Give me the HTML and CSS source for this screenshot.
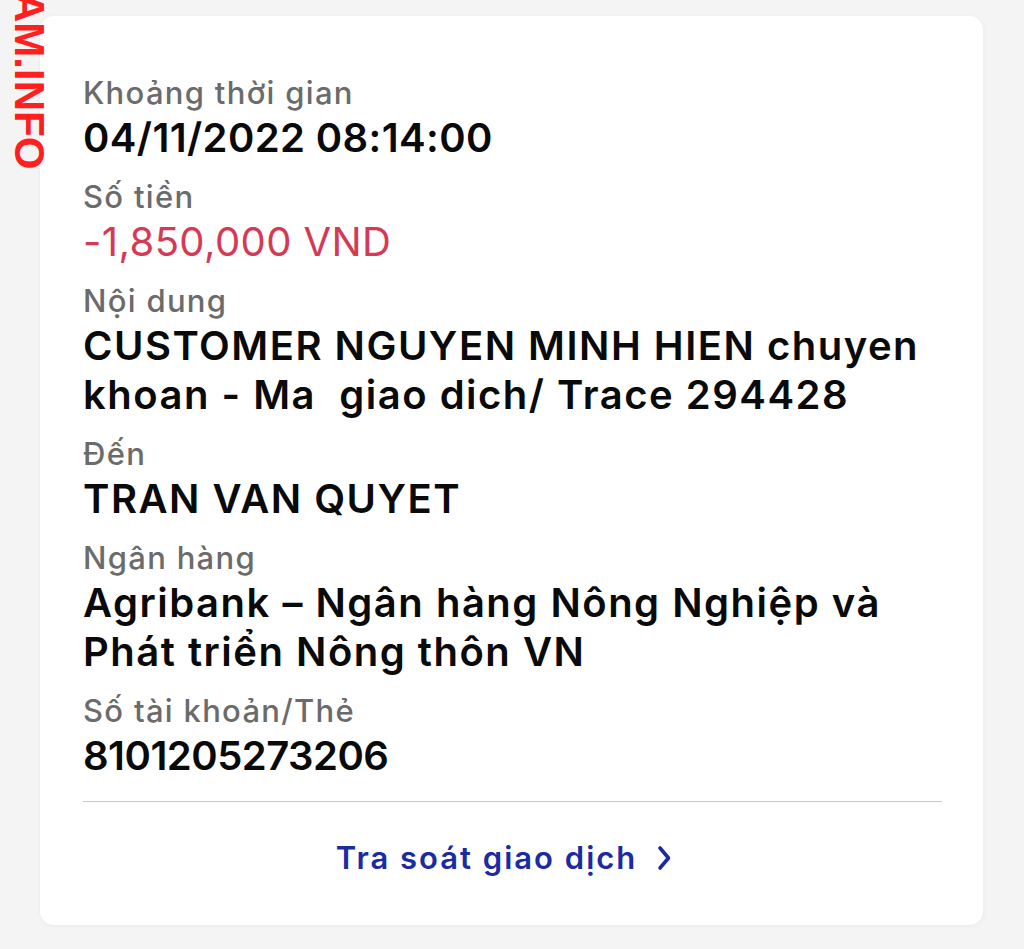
FILE: index.html
```html
<!DOCTYPE html>
<html lang="vi">
<head>
<meta charset="utf-8">
<title>Chi tiết giao dịch</title>
<link rel="stylesheet" href="styles.css">
</head>
<body>
<div class="watermark">AM.INFO</div>
<main class="card">
  <div class="field">
    <div class="label">Khoảng thời gian</div>
    <div class="value num">04/11/2022 08:14:00</div>
  </div>
  <div class="field">
    <div class="label">Số tiền</div>
    <div class="value num amount">-1,850,000 VND</div>
  </div>
  <div class="field">
    <div class="label">Nội dung</div>
    <div class="value">CUSTOMER NGUYEN MINH HIEN chuyen<br>khoan - Ma&nbsp; giao dich/ Trace 294428</div>
  </div>
  <div class="field">
    <div class="label">Đến</div>
    <div class="value">TRAN VAN QUYET</div>
  </div>
  <div class="field">
    <div class="label">Ngân hàng</div>
    <div class="value">Agribank – Ngân hàng Nông Nghiệp và<br>Phát triển Nông thôn VN</div>
  </div>
  <div class="field">
    <div class="label">Số tài khoản/Thẻ</div>
    <div class="value digits">8101205273206</div>
  </div>
  <hr class="divider">
  <a class="link" href="#">Tra soát giao dịch
    <svg class="chev" width="14" height="26" viewBox="0 0 14 26"><path d="M3 3 L11.5 13 L3 23" fill="none" stroke="currentColor" stroke-width="3.6" stroke-linecap="round" stroke-linejoin="round"/></svg>
  </a>
</main>
</body>
</html>
```
FILE: styles.css
```css
html, body {
  margin: 0;
  padding: 0;
}
body {
  background: #f4f4f4;
  width: 1024px;
  height: 949px;
  overflow: hidden;
  position: relative;
  font-family: "Inter", "Noto Sans", sans-serif;
  padding: 16px 41px 0 40px;
  box-sizing: border-box;
}
.card {
  background: #fff;
  border-radius: 14px;
  box-shadow: 0 1px 4px rgba(0,0,0,0.05);
  height: 909px;
  box-sizing: border-box;
  padding: 57px 41px 0 43px;
  display: flex;
  flex-direction: column;
}
.field {
  margin-bottom: 15px;
}
.label {
  color: #6b6b6b;
  font-size: 31px;
  line-height: 40px;
  font-weight: 500;
  letter-spacing: 1.3px;
}
.value {
  color: #0a0a0a;
  font-size: 40px;
  line-height: 49px;
  font-weight: 600;
  letter-spacing: 1.5px;
}
.value.num {
  letter-spacing: 0.4px;
}
.value.digits {
  letter-spacing: -0.5px;
}
.value.amount {
  color: #d43a55;
  font-weight: 400;
}
.divider {
  border: 0;
  border-top: 1.5px solid #c8c8c8;
  margin: 6px 0 0 0;
}
.link {
  align-self: center;
  margin-top: 36px;
  margin-right: 18px;
  color: #1b2ba3;
  text-decoration: none;
  font-size: 31px;
  line-height: 40px;
  font-weight: 600;
  letter-spacing: 2px;
  display: flex;
  align-items: center;
  gap: 20px;
}
.chev {
  display: block;
}
.watermark {
  position: absolute;
  left: 8px;
  top: -8px;
  writing-mode: vertical-rl;
  font-family: "Liberation Sans", Arial, sans-serif;
  font-weight: 700;
  font-size: 42px;
  line-height: 42px;
  color: #ff1f1f;
  z-index: 2;
}
```
